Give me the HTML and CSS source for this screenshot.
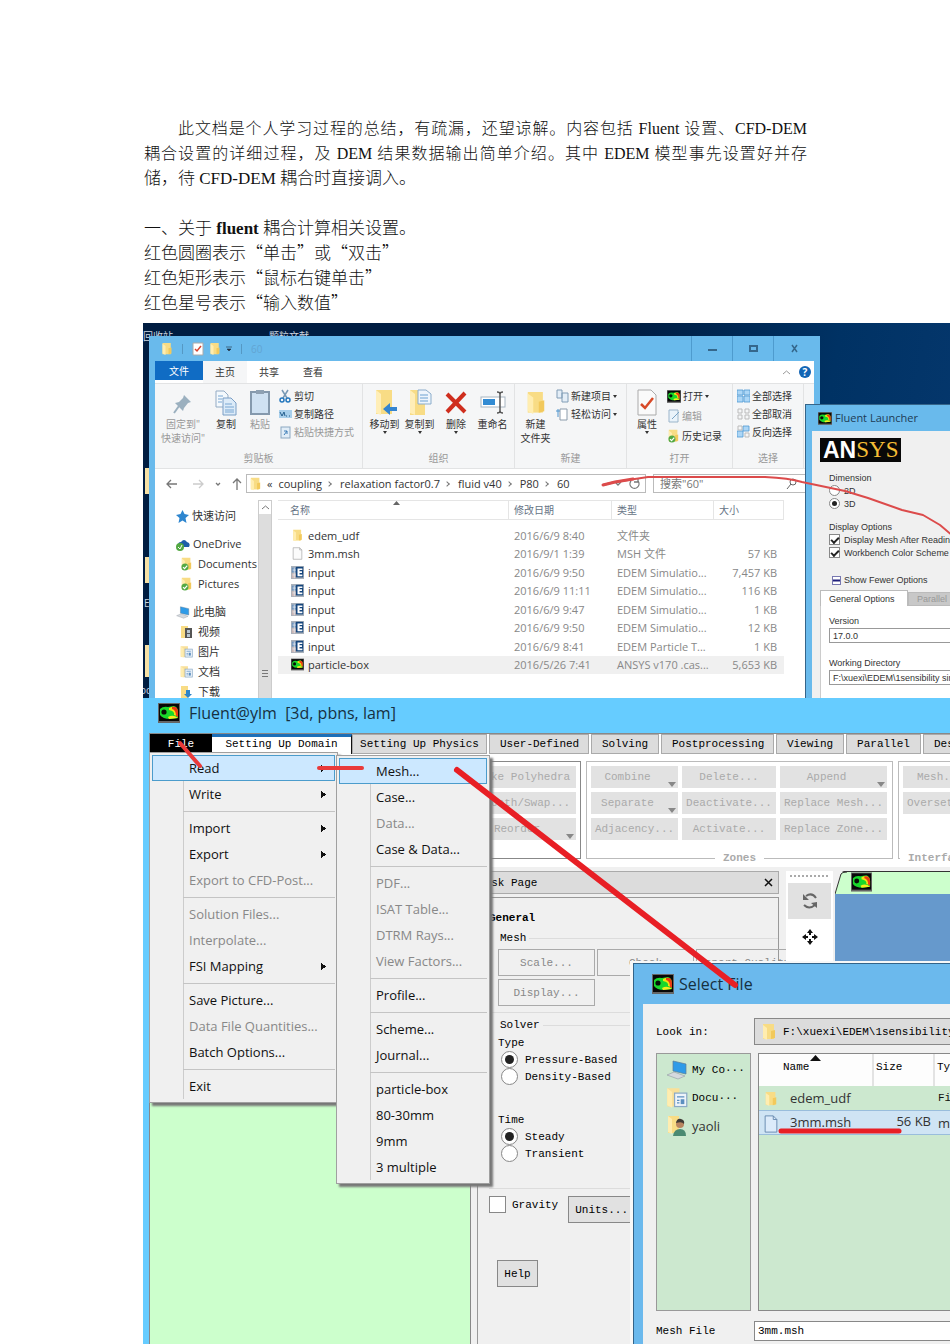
FILE: index.html
```html
<!DOCTYPE html>
<html lang="zh-CN">
<head>
<meta charset="utf-8">
<title>Fluent-EDEM 耦合设置</title>
<link rel="stylesheet" href="styles.css">
</head>
<body>
<svg class="defs" aria-hidden="true">
  <symbol id="fluent" viewBox="0 0 22 20"><rect width="22" height="20" fill="#666"/><rect x="1" y="1" width="20" height="17" fill="#080808"/><path d="M2 6Q5 3 10 4L16 3Q20 4 20 9V15L12 16Q5 16 2 12Z" fill="#19d82b"/><path d="M11 5Q17 2 19 6V13L16 12Q17 8 11 7Z" fill="#f2e310"/><path d="M14 4Q20 3 20 9V14L18 13Q18 7 14 6Z" fill="#ee3b12"/><path d="M10 14Q15 11 20 15L11 16Z" fill="#f4ef1c"/><circle cx="6" cy="9" r="2.600" fill="#061006"/></symbol>
  <symbol id="folder" viewBox="0 0 16 18"><path d="M2 1H13V16H2Z" fill="#f8dc85"/><path d="M2 2L6 5V17L2 15Z" fill="#ffedb0"/><path d="M10 8L14 7V15L10 16Z" fill="#f2c95c"/></symbol>
  <symbol id="file" viewBox="0 0 16 18"><path d="M2 1H11L14 4V17H2Z" fill="#fbfbfb" stroke="#aaa"/><path d="M11 1V4H14" fill="none" stroke="#aaa"/></symbol>
  <symbol id="edem" viewBox="0 0 16 16"><rect width="16" height="16" fill="#a9b1bb"/><path d="M1 2H6V8H1Z" fill="#6f94bd"/><path d="M1 9H6V15H1Z" fill="#c9b5b4"/><path d="M2 5H6M2 11H6M4 2V15" stroke="#e5e9ee"/><rect x="6" y="1" width="9" height="13" fill="#14457c"/><path d="M8 3H14V5H10.500V6.500H13.500V8.500H10.500V10.500H14V12.500H8Z" fill="#fff"/></symbol>
  <symbol id="folderok" viewBox="0 0 16 18"><use href="#folder"/><circle cx="6" cy="13" r="4.500" fill="#54a944"/><path d="M3.500 13L5.500 15L9 11" stroke="#fff" stroke-width="1.500" fill="none"/></symbol>
  <symbol id="folderdoc" viewBox="0 0 18 18"><path d="M1 1H11V16H1Z" fill="#f9e09a"/><path d="M1 1L5 4V17L1 15Z" fill="#ffedb0"/><rect x="7" y="5" width="10" height="11" fill="#eef4fa" stroke="#8aa9c6"/><path d="M9 8H15M9 11H11M9 13H11" stroke="#5c8fc0"/><path d="M12 10H15V14H12Z" fill="#5c8fc0"/></symbol>
  <symbol id="pc" viewBox="0 0 22 20"><path d="M7 1L20 4V14L7 11Z" fill="#2e9be8" stroke="#5d7b95" stroke-width=".7"/><path d="M1 15L8 12L19 16L12 19Z" fill="#d5d9de" stroke="#929aa2" stroke-width=".6"/></symbol>
  <symbol id="copy" viewBox="0 0 22 26"><path d="M1 1H9L13 5V17H1Z" fill="#f4f9fd" stroke="#93abc4"/><path d="M8 8H16L21 13V25H8Z" fill="#dcebf8" stroke="#7b9ec5"/><path d="M3 6H8M3 9H7M3 12H7M10 14H17M10 17H19M10 20H19M10 22H19" stroke="#79a6d2"/></symbol>
</svg>

<main class="document">
  <p class="intro indent">此文档是个人学习过程的总结，有疏漏，还望谅解。内容包括 Fluent 设置、CFD-DEM</p>
  <p class="intro">耦合设置的详细过程，及 DEM 结果数据输出简单介绍。其中 EDEM 模型事先设置好并存</p>
  <p>储，待 CFD-DEM 耦合时直接调入。</p>
  <h2>一、关于 <b>fluent</b> 耦合计算相关设置。</h2>
  <p class="note">红色圆圈表示“单击”或“双击”</p>
  <p class="note">红色矩形表示“鼠标右键单击”</p>
  <p class="note">红色星号表示“输入数值”</p>
</main>

<section class="desktop">
  <span class="shortcut bin">回收站</span><span class="shortcut papers">颗粒文献</span>
  <i class="edge edge-one"></i><i class="edge edge-two"></i><i class="edge edge-three"></i>
  <span class="shortcut letter">E</span><span class="shortcut docs">oc</span>

  <div class="explorer">
    <header class="ex-title">
      <svg width="12" height="14"><use href="#folder"/></svg><i class="bar"></i>
      <svg width="12" height="14" viewBox="0 0 12 14"><path d="M1 1H11V13H1Z" fill="#fff" stroke="#aaa"/><path d="M3 7L5 9L9 4" fill="none" stroke="#d64531" stroke-width="1.500"/></svg>
      <svg width="12" height="14"><use href="#folder"/></svg>
      <svg width="6" height="6" viewBox="0 0 6 6"><path d="M0 1H6M1 3H5L3 5Z" fill="#234" stroke="#234" stroke-width=".6"/></svg><i class="bar"></i><span class="ghost">60</span>
      <div class="win-buttons">
        <button aria-label="最小化"><svg width="9" height="9" viewBox="0 0 9 9"><path d="M0 6H9" stroke="#35678c" stroke-width="2"/></svg></button>
        <button aria-label="最大化"><svg width="9" height="9" viewBox="0 0 9 9"><path d="M1 2H8V7H1Z" fill="none" stroke="#35678c" stroke-width="2"/></svg></button>
        <button aria-label="关闭"><svg width="9" height="9" viewBox="0 0 9 9"><path d="M2 1L7 8M7 1L2 8" stroke="#35678c" stroke-width="1.500"/></svg></button>
      </div>
    </header>
    <nav class="ex-tabs">
      <button class="file-tab">文件</button><button class="on">主页</button><button>共享</button><button>查看</button>
      <span class="help"><svg width="9" height="5" viewBox="0 0 9 5"><path d="M1 4L4.500 1L8 4" fill="none" stroke="#999"/></svg><button class="q">?</button></span>
    </nav>
    <div class="ex-ribbon">
      <div class="group g-clip">
        <div class="tools">
          <button class="big dim w-pin"><svg width="26" height="28" viewBox="0 0 26 28"><path d="M14 6L21 13L18 14L14 19L13 22L5 14L9 13L13 9Z" fill="#9bb0bf"/><path d="M9 17L4 24" stroke="#9bb0bf" stroke-width="2"/></svg>固定到"<br>快速访问"</button>
          <button class="big w-copy"><svg width="22" height="28"><use href="#copy"/></svg>复制</button>
          <button class="big dim w-paste"><svg width="20" height="28" viewBox="0 0 20 28"><rect x="1" y="3" width="18" height="22" fill="#cfe1f2" stroke="#8599ad" stroke-width="2"/><rect x="6" y="1" width="8" height="4" fill="#8fa1b3"/></svg>粘贴</button>
          <div class="stack">
            <button><svg width="13" height="14" viewBox="0 0 13 14"><path d="M3 1L8 9M9 1L4 9" stroke="#7899b5" stroke-width="1.500"/><circle cx="3" cy="11" r="2" fill="none" stroke="#2477bd" stroke-width="1.500"/><circle cx="9" cy="11" r="2" fill="none" stroke="#2477bd" stroke-width="1.500"/></svg>剪切</button>
            <button><svg width="13" height="14" viewBox="0 0 13 14"><rect y="3" width="13" height="8" fill="#a8cfeb"/><path d="M1 5L3 9L5 5L6 9M7 9H8M10 9H11" stroke="#235d8c" fill="none"/></svg>复制路径</button>
            <button class="dim"><svg width="13" height="14" viewBox="0 0 13 14"><rect x="2" y="2" width="9" height="11" fill="#e1edf7" stroke="#8ba7c1"/><path d="M5 10L8 6M5 6H8V9" stroke="#3c7db7" fill="none"/></svg>粘贴快捷方式</button>
          </div>
        </div><footer>剪贴板</footer>
      </div>
      <div class="group g-org">
        <div class="tools">
          <button class="big"><svg width="26" height="28" viewBox="0 0 26 28"><path d="M4 1H20V25H4Z" fill="#f8dc85"/><path d="M4 1L9 5V26L4 24Z" fill="#ffeeb7"/><path d="M11 20L18 14V18H25V22H18V26Z" fill="#3484cf"/></svg>移动到<i class="caret"></i></button>
          <button class="big"><svg width="26" height="28" viewBox="0 0 26 28"><path d="M3 1H18V26H3Z" fill="#f8dc85"/><path d="M3 1L8 5V26L3 24Z" fill="#ffeeb7"/><path d="M11 1H19L24 5V15H11Z" fill="#eef5fc" stroke="#8baccb"/><path d="M13 6H21M13 9H21M13 12H21" stroke="#6ca1d1"/></svg>复制到<i class="caret"></i></button>
          <button class="big w-del"><svg width="24" height="28" viewBox="0 0 24 28"><path d="M3 5L21 23M21 4L3 23" stroke="#cf2e1e" stroke-width="4"/></svg>删除<i class="caret"></i></button>
          <button class="big"><svg width="26" height="28" viewBox="0 0 26 28"><rect x="1" y="8" width="24" height="10" fill="#fff" stroke="#a8b5c2"/><rect x="3" y="10" width="12" height="6" fill="#328bd3"/><path d="M17 3Q20 3 20 5Q20 3 23 3M20 5V22M17 24Q20 24 20 22Q20 24 23 24" fill="none" stroke="#555" stroke-width="1.500"/></svg>重命名</button>
        </div><footer>组织</footer>
      </div>
      <div class="group g-new">
        <div class="tools">
          <button class="big"><svg width="22" height="28"><use href="#folder"/></svg>新建<br>文件夹</button>
          <div class="stack">
            <button><svg width="13" height="14" viewBox="0 0 13 14"><path d="M1 1H6V9H1ZM6 4H12V13H6Z" fill="#e4eef7" stroke="#819db6"/></svg>新建项目<i class="caret"></i></button>
            <button><svg width="13" height="14" viewBox="0 0 13 14"><path d="M4 2H11V13H4Z" fill="#fff" stroke="#8b9bab"/><path d="M0 4H4M2 2V10" stroke="#4e94cd"/></svg>轻松访问<i class="caret"></i></button>
          </div>
        </div><footer>新建</footer>
      </div>
      <div class="group g-open">
        <div class="tools">
          <button class="big w-prop"><svg width="22" height="28" viewBox="0 0 22 28"><path d="M2 1H15L20 6V26H2Z" fill="#fafafa" stroke="#aaa"/><path d="M5 15L9 19L17 9" fill="none" stroke="#d84a28" stroke-width="2.500"/></svg>属性<i class="caret"></i></button>
          <div class="stack tall">
            <button><svg width="14" height="13"><use href="#fluent"/></svg>打开<i class="caret"></i></button>
            <button class="dim"><svg width="13" height="14" viewBox="0 0 13 14"><path d="M2 1H11V13H2Z" fill="#eaf3fa" stroke="#9bb5ca"/><path d="M5 10L12 3" stroke="#7ba4c5"/></svg>编辑</button>
            <button><svg width="13" height="14"><use href="#folderok"/></svg>历史记录</button>
          </div>
        </div><footer>打开</footer>
      </div>
      <div class="group g-sel">
        <div class="tools"><div class="stack">
            <button><svg width="13" height="14" viewBox="0 0 13 14"><path d="M0 1H6V6H0ZM7 1H13V6H7ZM0 7H6V13H0ZM7 7H13V13H7Z" fill="#acd6f6" stroke="#4e9ad3" stroke-width=".8"/></svg>全部选择</button>
            <button><svg width="13" height="14" viewBox="0 0 13 14"><path d="M1 2H5V6H1ZM8 2H12V6H8ZM1 8H5V12H1ZM8 8H12V12H8Z" fill="none" stroke="#bbb"/></svg>全部取消</button>
            <button><svg width="13" height="14" viewBox="0 0 13 14"><path d="M6 1H12V6H6ZM0 6H6V12H0Z" fill="#acd6f6" stroke="#4e9ad3" stroke-width=".8"/><path d="M1 1H5V5H1ZM8 8H12V12H8Z" fill="none" stroke="#bbb"/></svg>反向选择</button>
        </div></div><footer>选择</footer>
      </div>
    </div>
    <div class="ex-address">
      <svg width="80" height="14" viewBox="0 0 80 14" fill="none" stroke="#777" stroke-width="1.300"><path d="M2 7H12M6 3L2 7L6 11"/><path stroke="#ccc" d="M28 7H38M34 3L38 7L34 11"/><path d="M51 6L53 8L55 6"/><path d="M72 13V2M68 6L72 2L76 6"/></svg>
      <div class="crumbs"><svg width="13" height="14"><use href="#folder"/></svg><span>«</span><a href="#c">coupling</a><i></i><a href="#r">relaxation factor0.7</a><i></i><a href="#f">fluid v40</a><i></i><a href="#p">P80</a><i></i><a href="#s">60</a>
        <svg class="reload" width="28" height="14" viewBox="0 0 28 14" fill="none" stroke="#777" stroke-width="1.300"><path d="M1 5L4 8L7 5"/><path d="M17 4A4.500 4.500 0 1 0 24 4M24 1V5H20"/></svg></div>
      <div class="search"><input aria-label="搜索" value="搜索&quot;60&quot;"><svg width="12" height="12" viewBox="0 0 12 12" fill="none" stroke="#666"><circle cx="7" cy="4" r="3"/><path d="M5 6L1 11"/></svg></div>
    </div>
    <div class="ex-body">
      <ul class="side">
        <li><svg width="13" height="13" viewBox="0 0 13 13"><path d="M6.500 0L8.500 4L13 5L9.500 8L10.500 13L6.500 10.500L2.500 13L3.500 8L0 5L4.500 4Z" fill="#2e86cf"/></svg>快速访问</li>
        <li class="top"><svg width="14" height="13" viewBox="0 0 14 13"><path d="M3 9Q1 4 5 4Q8 0 11 4Q15 5 13 9Z" fill="#1e5fa9"/><circle cx="4" cy="9" r="4" fill="#54a944"/><path d="M2 9L4 11L6 7" fill="none" stroke="#fff"/></svg>OneDrive</li>
        <li class="sub"><svg width="13" height="14"><use href="#folderok"/></svg>Documents</li>
        <li class="sub"><svg width="13" height="14"><use href="#folderok"/></svg>Pictures</li>
        <li class="top"><svg width="14" height="13"><use href="#pc"/></svg>此电脑</li>
        <li class="sub"><svg width="13" height="14" viewBox="0 0 13 14"><path d="M1 1H8V13H1Z" fill="#f8dc85"/><rect x="5" y="3" width="7" height="10" fill="#555"/><path d="M7 5H10V8H7ZM7 9H10V12H7Z" fill="#b8c7d2"/></svg>视频</li>
        <li class="sub"><svg width="13" height="14"><use href="#folderdoc"/></svg>图片</li>
        <li class="sub"><svg width="13" height="14"><use href="#folderdoc"/></svg>文档</li>
        <li class="sub"><svg width="13" height="14" viewBox="0 0 13 14"><path d="M1 1H8V13H1Z" fill="#f8dc85"/><path d="M6 5H10V9H12L8 13L4 9H6Z" fill="#2c83c8"/></svg>下载</li>
      </ul>
      <div class="scroll"><button aria-label="向上滚动"><svg width="7" height="5" viewBox="0 0 7 5"><path d="M0 4L3.500 1L7 4" fill="none" stroke="#777"/></svg></button><i></i></div>
      <table class="files">
        <colgroup><col class="c-name"><col class="c-date"><col class="c-type"><col class="c-size"></colgroup>
        <thead><tr><th>名称<svg class="sort" width="7" height="4" viewBox="0 0 7 4"><path d="M0 4L3.500 0L7 4Z" fill="#666"/></svg></th><th>修改日期</th><th>类型</th><th>大小</th></tr></thead>
        <tbody>
        <tr><td><svg width="13" height="13"><use href="#folder"/></svg>edem_udf</td><td>2016/6/9 8:40</td><td>文件夹</td><td></td></tr>
        <tr><td><svg width="13" height="13"><use href="#file"/></svg>3mm.msh</td><td>2016/9/1 1:39</td><td>MSH 文件</td><td>57 KB</td></tr>
        <tr><td><svg width="13" height="13"><use href="#edem"/></svg>input</td><td>2016/6/9 9:50</td><td>EDEM Simulatio...</td><td>7,457 KB</td></tr>
        <tr><td><svg width="13" height="13"><use href="#edem"/></svg>input</td><td>2016/6/9 11:11</td><td>EDEM Simulatio...</td><td>116 KB</td></tr>
        <tr><td><svg width="13" height="13"><use href="#edem"/></svg>input</td><td>2016/6/9 9:47</td><td>EDEM Simulatio...</td><td>1 KB</td></tr>
        <tr><td><svg width="13" height="13"><use href="#edem"/></svg>input</td><td>2016/6/9 9:50</td><td>EDEM Simulatio...</td><td>12 KB</td></tr>
        <tr><td><svg width="13" height="13"><use href="#edem"/></svg>input</td><td>2016/6/9 8:41</td><td>EDEM Particle T...</td><td>1 KB</td></tr>
        <tr class="sel"><td><svg width="13" height="13"><use href="#fluent"/></svg>particle-box</td><td>2016/5/26 7:41</td><td>ANSYS v170 .cas...</td><td>5,653 KB</td></tr>
        </tbody>
      </table>
    </div>
  </div>

  <div class="launcher">
    <header><svg width="14" height="13"><use href="#fluent"/></svg>Fluent Launcher</header>
    <div class="la-body">
      <div class="ansys"><b>AN</b><span>SYS</span></div>
      <fieldset class="la-set"><legend>Dimension</legend>
        <label><input type="radio" name="dim">2D</label>
        <label><input type="radio" name="dim" checked>3D</label></fieldset>
      <fieldset class="la-set"><legend>Display Options</legend>
        <label><input type="checkbox" checked>Display Mesh After Reading</label>
        <label><input type="checkbox" checked>Workbench Color Scheme</label></fieldset>
      <button class="fewer"><svg width="9" height="9" viewBox="0 0 9 9"><rect x=".5" y=".5" width="8" height="8" fill="#fff" stroke="#7777b0"/><path d="M1 4.500H8" stroke="#20207c" stroke-width="2"/></svg>Show Fewer Options</button>
      <div class="la-tabs"><button class="on">General Options</button><button>Parallel</button></div>
      <div class="la-panel">
        <label>Version<input value="17.0.0"></label>
        <label>Working Directory<input value="F:\xuexi\EDEM\1sensibility simulation"></label>
      </div>
    </div>
  </div>
  <svg class="ink" width="807" height="375" viewBox="0 0 807 375" fill="none" stroke="#dc4b4b" stroke-linecap="round" stroke-linejoin="round"><path d="M460 162L472 159L505 154H622Q646 155 659 159L702 168L725 175L759 187L780 192L797 202L810 213" stroke-width="2"/><path d="M460 162L472 159L490 156" stroke-width="3"/></svg>
</section>

<section class="fluent">
  <header class="fl-title"><svg width="22" height="20"><use href="#fluent"/></svg>Fluent@ylm&nbsp; [3d, pbns, lam]</header>
  <div class="fl-frame">
    <nav class="fl-tabs"><button class="file">File</button><button class="on t-dom">Setting Up Domain</button><button class="t-phy">Setting Up Physics</button><button class="t-usr">User-Defined</button><button class="t-sol">Solving</button><button class="t-pos">Postprocessing</button><button class="t-sol">Viewing</button><button class="t-par">Parallel</button><button>Design</button></nav>
    <div class="fl-ribbon">
      <div class="rg r-mesh"><div class="cells"><button disabled>Make Polyhedra</button><button disabled>Smooth/Swap...</button><button disabled class="drop"><span>Reorder</span></button></div></div>
      <div class="rg r-zones"><div class="cells">
        <button disabled class="drop"><span>Combine</span></button><button disabled>Delete...</button><button disabled class="drop"><span>Append</span></button>
        <button disabled class="drop"><span>Separate</span></button><button disabled>Deactivate...</button><button disabled>Replace Mesh...</button>
        <button disabled>Adjacency...</button><button disabled>Activate...</button><button disabled>Replace Zone...</button></div>
        <div class="cap">Zones</div></div>
      <div class="rg r-int"><div class="cells"><button disabled>Mesh...</button><button disabled>Overset...</button></div><div class="cap">Interfaces</div></div>
    </div>
    <div class="fl-work">
      <div class="tree"></div>
      <div class="task">
        <div class="task-head"><span>Task Page</span><button aria-label="Close"><svg width="9" height="9" viewBox="0 0 9 9"><path d="M1 1L8 8M8 1L1 8" stroke="#111" stroke-width="1.500"/></svg></button></div>
        <div class="task-body">
          <h3>General</h3>
          <div class="rule"><span>Mesh</span></div>
          <div class="mesh-btns"><button disabled>Scale...</button><button disabled>Check</button><button disabled>Report Quality</button><button disabled>Display...</button></div>
          <div class="rule solver"><span>Solver</span></div>
          <fieldset class="opts"><legend>Type</legend><label><input type="radio" name="type" checked>Pressure-Based</label><label><input type="radio" name="type">Density-Based</label></fieldset>
          <fieldset class="opts time"><legend>Time</legend><label><input type="radio" name="time" checked>Steady</label><label><input type="radio" name="time">Transient</label></fieldset>
          <div class="grav"><label><input type="checkbox">Gravity</label><button>Units...</button></div>
          <button class="helpb">Help</button>
        </div>
      </div>
      <div class="vbar"><i></i>
        <button class="on" aria-label="Rotate"><svg width="18" height="18" viewBox="0 0 18 18" fill="none" stroke="#666" stroke-width="2"><path d="M5 4Q11 0 15 6M3 13Q8 18 14 13"/><path d="M2 2V8H8ZM16 10V16L10 11Z" fill="#666" stroke="none"/></svg></button>
        <button aria-label="Pan"><svg width="18" height="18" viewBox="0 0 18 18"><path d="M9 1L12 5H10V7H8V5H6ZM9 17L6 13H8V11H10V13H12ZM1 9L5 6V8H7V10H5V12ZM17 9L13 12V10H11V8H13V6Z" fill="#111"/></svg></button></div>
      <div class="view"><div class="view-tab"><svg class="slant" width="12" height="23" viewBox="0 0 12 23"><path d="M0 0H9Q7 0 6 3L0 23Z" fill="#f0f0f0"/><path d="M0 23L6 3Q7 1 12 1" fill="none" stroke="#333"/></svg><svg width="21" height="20"><use href="#fluent"/></svg></div></div>
    </div>
  </div>

  <ul class="menu menu-file">
    <li class="hot more"><button>Read</button></li><li class="more"><button>Write</button></li>
    <li class="more sep"><button>Import</button></li><li class="more"><button>Export</button></li><li><button disabled>Export to CFD-Post...</button></li>
    <li class="sep"><button disabled>Solution Files...</button></li><li><button disabled>Interpolate...</button></li><li class="more"><button>FSI Mapping</button></li>
    <li class="sep"><button>Save Picture...</button></li><li><button disabled>Data File Quantities...</button></li><li><button>Batch Options...</button></li>
    <li class="sep"><button>Exit</button></li>
  </ul>
  <ul class="menu menu-read">
    <li class="hot"><button>Mesh...</button></li><li><button>Case...</button></li><li><button disabled>Data...</button></li><li><button>Case &amp; Data...</button></li>
    <li class="sep"><button disabled>PDF...</button></li><li><button disabled>ISAT Table...</button></li><li><button disabled>DTRM Rays...</button></li><li><button disabled>View Factors...</button></li>
    <li class="sep"><button>Profile...</button></li>
    <li class="sep"><button>Scheme...</button></li><li><button>Journal...</button></li>
    <li class="sep"><button>particle-box</button></li><li><button>80-30mm</button></li><li><button>9mm</button></li><li><button>3 multiple</button></li>
  </ul>

  <div class="dialog">
    <header><svg width="22" height="20"><use href="#fluent"/></svg>Select File</header>
    <div class="dg-body">
      <label for="lookin">Look in:</label>
      <button class="combo" id="lookin"><svg width="16" height="18"><use href="#folder"/></svg>F:\xuexi\EDEM\1sensibility</button>
      <ul class="places">
        <li><svg width="24" height="22"><use href="#pc"/></svg>My Co···</li>
        <li><svg width="20" height="20"><use href="#folderdoc"/></svg>Docu···</li>
        <li class="ui"><svg width="20" height="22" viewBox="0 0 20 22"><path d="M1 1H12V18H1Z" fill="#f8dc85"/><path d="M1 1L5 4V19L1 17Z" fill="#ffedb0"/><circle cx="13" cy="9" r="4" fill="#b98560"/><path d="M9 8Q10 3 14 4Q18 5 17 9Q15 6 9 8Z" fill="#3f3a35"/><path d="M6 21Q7 14 13 14Q19 14 19 21Z" fill="#4b8a72"/></svg>yaoli</li>
      </ul>
      <div class="listing"><table>
        <colgroup><col class="n"><col class="s"><col></colgroup>
        <thead><tr><th>Name<svg class="sort" width="11" height="6" viewBox="0 0 11 6"><path d="M0 6L5.500 0L11 6Z" fill="#111"/></svg></th><th>Size</th><th>Type</th></tr></thead>
        <tbody><tr><td><svg width="14" height="18"><use href="#folder"/></svg>edem_udf</td><td></td><td class="mono">File Folder</td></tr>
        <tr class="sel"><td><svg width="15" height="20" viewBox="0 0 15 20"><path d="M1 1H10L14 5V19H1Z" fill="#dcebfa" stroke="#6286ad"/><path d="M10 1V5H14" fill="none" stroke="#6286ad"/></svg>3mm.msh</td><td>56 KB</td><td>msh File</td></tr></tbody>
      </table></div>
      <label for="meshfile">Mesh File</label><input id="meshfile" value="3mm.msh">
    </div>
  </div>
  <svg class="ink" width="807" height="646" viewBox="0 0 807 646" fill="none" stroke="#ee2a2e" stroke-linecap="round"><path d="M37 45L57 68" stroke-width="4" stroke="#e93a3a"/><path d="M176 70H219" stroke-width="4" stroke="#e93a3a"/><path d="M314 72L592 287" stroke="#e81f25" stroke-width="6"/><path d="M638 433H756" stroke="#e81f25" stroke-width="5"/></svg>
</section>
</body>
</html>
```
FILE: styles.css
```css
* { box-sizing: border-box; }
body { margin: 0; min-height: 100vh; display: flex; flex-direction: column; background: #fff; color: #000; overflow-x: hidden; font-family: "Liberation Serif", "Noto Sans CJK SC", serif; }
button, input { font: inherit; color: inherit; margin: 0; padding: 0; border: 0; background: none; border-radius: 0; white-space: nowrap; }
ul { list-style: none; margin: 0; padding: 0; }
fieldset { border: 0; margin: 0; padding: 0; min-width: 0; }
legend { padding: 0; }
a { color: inherit; text-decoration: none; }
svg { flex: none; }
.defs { position: absolute; width: 0; height: 0; }
.ink { position: absolute; left: 0; top: 0; pointer-events: none; }

/* document text */
.document { padding: 116px 143px 7px 144px; font-size: 17px; line-height: 25px; font-weight: 300; color: #111; }
.document p, .document h2 { margin: 0; font-size: 17px; font-weight: 300; white-space: nowrap; height: 25px; }
.document b { font-weight: 700; }
.document p.intro { font-size: 16px; white-space: normal; text-align: justify; text-align-last: justify; }
.document p.indent { padding-left: 34px; }
.document h2 { margin-top: 25px; }
.document .note { font-family: "Noto Sans CJK SC", sans-serif; line-height: 21px; }

/* desktop picture */
.desktop { position: relative; height: 375px; margin-left: 143px; overflow: hidden; background: linear-gradient(100deg, #001d41 55%, #003264 80%, #06386e); font: 11px/16px "Open Sans", "Noto Sans CJK SC", sans-serif; color: #333; }
.shortcut { position: absolute; color: #ccd6e0; font-size: 10px; line-height: 12px; }
.bin { left: 0; top: 7px; }
.papers { left: 126px; top: 7px; }
.letter { left: 1px; top: 274px; }
.docs { left: -3px; top: 361px; }
.edge { position: absolute; left: 2px; width: 4px; background: #f6e0a4; }
.edge-one { top: 145px; height: 26px; }
.edge-two { top: 234px; height: 26px; }
.edge-three { top: 322px; height: 32px; }

.explorer { position: absolute; left: 6px; top: 13px; width: 671px; height: 380px; border: solid #69baec; border-width: 0 6px; background: #fff; display: flex; flex-direction: column; }
.ex-title { height: 25px; background: #69baec; display: flex; align-items: center; gap: 5px; padding-left: 6px; }
.bar { width: 1px; height: 10px; background: #5598c4; }
.ex-title .bar { margin: 0 4px; }
.ghost { color: #62a5d3; font-size: 10px; }
.win-buttons { margin-left: auto; display: flex; align-self: stretch; }
.win-buttons button { width: 41px; border-left: 1px solid #4e9bce; }
.ex-tabs { height: 22px; display: flex; align-items: stretch; font-size: 10px; }
.ex-tabs button { width: 44px; }
.ex-tabs .file-tab { width: 48px; background: #106cc4; color: #fff; margin: 0 0 3px; }
.ex-tabs .on { background: #f5f6f7; }
.help { margin-left: auto; display: flex; align-items: center; gap: 8px; padding-right: 3px; }
.ex-tabs .q { width: 12px; height: 12px; border-radius: 6px; background: #1265b5; color: #fff; font-weight: 700; line-height: 12px; }
.ex-ribbon { height: 86px; background: #f5f6f7; border: solid #e2e3e4; border-width: 1px 0; display: flex; font-size: 10px; line-height: 14px; }
.group { display: flex; flex-direction: column; border-right: 1px solid #e2e3e4; }
.g-clip { width: 208px; } .g-org { width: 152px; } .g-new { width: 112px; } .g-open { width: 106px; } .g-sel { width: 71px; }
.tools { flex: 1; display: flex; padding-top: 5px; }
.g-org .tools { padding-left: 4px; }
.g-sel .tools { padding-left: 4px; }
.group footer { text-align: center; height: 17px; color: #999; }
.big { display: flex; flex-direction: column; align-items: center; width: 35px; line-height: 14px; }
.big svg { height: 28px; }
.w-pin { width: 56px; } .w-copy { width: 30px; } .w-paste { width: 38px; } .w-del { width: 38px; }
.g-new .big { width: 41px; } .w-prop { width: 40px; }
.caret { width: 0; height: 0; border: solid transparent; border-width: 3px 2px 0; border-top-color: #333; }
.stack { display: flex; flex-direction: column; gap: 4px; }
.stack.tall { gap: 6px; }
.stack button { display: flex; align-items: center; gap: 2px; height: 14px; }
.dim { color: #999; }
.ex-address { height: 29px; display: flex; align-items: center; padding-left: 10px; }
.crumbs { margin-left: 1px; width: 400px; flex: none; height: 19px; border: 1px solid #bbb; display: flex; align-items: center; padding: 0 3px 0 2px; }
.crumbs span { margin: 0 6px 0 5px; }
.crumbs i { width: 4px; height: 4px; border: solid #777; border-width: 1px 1px 0 0; rotate: 45deg; margin: 0 9px 0 5px; }
.reload { margin-left: auto; }
.search { margin-left: 7px; flex: 1; min-width: 0; height: 19px; border: 1px solid #bbb; display: flex; align-items: center; padding: 0 15px 0 6px; color: #777; }
.search input { flex: 1; min-width: 0; }
.ex-body { flex: 1; display: flex; min-height: 0; padding-top: 2px; }
.side { width: 103px; padding: 6px 0 0 21px; white-space: nowrap; }
.side li { height: 20px; display: flex; align-items: center; gap: 3px; }
.side .top { margin-top: 8px; }
.side .sub { padding-left: 4px; gap: 5px; }
.scroll { width: 14px; flex: none; background: #ddd; border: solid #ccc; border-width: 1px 1px 0; display: flex; flex-direction: column; align-items: center; }
.scroll button { width: 12px; height: 13px; background: #fff; display: grid; place-items: center; }
.scroll i { width: 6px; height: 8px; margin-top: 156px; background: repeating-linear-gradient(#777 0 1px, transparent 1px 3px); }
.files { align-self: flex-start; table-layout: fixed; width: 506px; margin-left: 6px; border-collapse: separate; border-spacing: 0; white-space: nowrap; color: #888; }
.c-name { width: 231px; } .c-date { width: 103px; } .c-type { width: 102px; } .c-size { width: 70px; }
.files th { height: 20px; padding: 0 5px; font-weight: 400; font-size: 10px; text-align: left; color: #667385; border: solid #e5e5e5; border-width: 1px 1px 1px 0; position: relative; }
.files th:first-child { padding-left: 12px; }
.files .sort { position: absolute; left: 115px; top: 0; }
.files tbody::before { content: ""; display: block; height: 6px; }
.files td { height: 18px; padding: 0 5px; line-height: 18px; }
.files tr:nth-child(odd) td { height: 19px; }
.files td:first-child { color: #333; padding-left: 13px; }
.files td:last-child { text-align: right; padding: 0 7px 0 0; }
.files td svg { vertical-align: -2px; margin-right: 4px; }
.files .sel td { background: #f0f0f0; }

.launcher { position: absolute; left: 663px; top: 82px; width: 320px; height: 300px; border-left: 6px solid #69baec; box-shadow: -1px -1px #35658a; background: #f0f0f0; color: #333; }
.launcher header { height: 26px; background: #69baec; display: flex; align-items: center; gap: 3px; padding-left: 6px; font-size: 11px; color: #1d3c55; }
.la-body { font: 9px/14px "Liberation Sans", sans-serif; padding: 7px 0 0 8px; display: flex; flex-direction: column; align-items: flex-start; }
.ansys { display: flex; align-items: center; background: #080808; height: 24px; padding: 0 3px; font-size: 23px; line-height: 24px; color: #fff; }
.ansys b { font-family: "Liberation Sans", sans-serif; }
.ansys span { font-family: "Liberation Serif", serif; color: #f5bd35; }
.la-set { margin: 9px 0 0 9px; }
.la-set + .la-set { margin-top: 10px; }
.la-set label { display: flex; align-items: center; gap: 4px; height: 13px; white-space: nowrap; }
.la-set legend { height: 13px; }
input[type=radio], input[type=checkbox] { appearance: none; flex: none; background: #fff; border: 1px solid #888; display: grid; place-items: center; }
input[type=radio] { border-radius: 50%; }
.la-set input { width: 11px; height: 11px; }
.la-set input[type=radio]:checked::before { content: ""; width: 5px; height: 5px; border-radius: 50%; background: #222; }
.la-set input[type=checkbox]:checked::before { content: ""; width: 6px; height: 3px; border: solid #222; border-width: 0 0 2px 2px; rotate: -45deg; }
.fewer { display: flex; align-items: center; gap: 3px; margin: 14px 0 4px 12px; height: 14px; }
.la-tabs { display: flex; align-items: flex-end; height: 15px; }
.la-tabs button { width: 80px; height: 14px; background: #c8c8c8; color: #999; text-align: left; padding: 0 8px; border: 1px solid #bbb; line-height: 12px; }
.la-tabs .on { width: 88px; height: 16px; background: #fff; color: #333; border-bottom: 0; }
.la-panel { align-self: stretch; height: 120px; background: #fff; border-left: 1px solid #ccc; padding: 8px 0 0 8px; }
.la-panel label { display: block; margin-bottom: 13px; }
.la-panel input { display: block; width: 100%; height: 15px; border: 1px solid #999; padding-left: 3px; }

/* Fluent picture */
.fluent { position: relative; flex: 1; min-height: 646px; height: 646px; margin-left: 143px; overflow: hidden; background: #66ccff; font: 11px/16px "Liberation Mono", monospace; display: flex; flex-direction: column; }
.fl-title { height: 35px; display: flex; align-items: center; gap: 9px; padding: 0 0 5px 15px; font: 16px/24px "Open Sans", sans-serif; color: #16303f; }
.fl-frame { flex: 1; margin-left: 6px; border: solid #888; border-width: 1px 0 0 1px; background: #f0f0f0; display: flex; flex-direction: column; min-height: 0; }
.fl-tabs { display: flex; height: 20px; gap: 2px; background: #fff; flex: none; }
.fl-tabs button { background: #dcdcdc; border: 1px solid #aaa; flex: none; padding: 0 10px; line-height: 18px; }
.fl-tabs .file { width: 62px; background: #000; color: #fff; border: 0; margin-right: -2px; }
.fl-tabs .on { background: #fff; border: solid #111; border-width: 0 1px 0 0; border-top: 3px solid #1c6fb8; line-height: 12px; margin-right: -2px; padding: 0 0 4px; }
.t-dom { width: 140px; }
.fl-tabs .t-phy { width: 135px; padding: 0; } .t-usr { width: 100px; } .fl-tabs .t-sol { width: 68px; padding: 0; } .fl-tabs .t-pos { width: 113px; } .t-par { width: 75px; }
.fl-ribbon { height: 113px; flex: none; background: #fff; display: flex; gap: 5px; padding: 7px 0 8px 317px; }
.rg { border: 1px solid #bbb; padding: 4px; display: flex; flex-direction: column; flex: none; }
.r-mesh { width: 114px; border-color: #888; }
.r-zones { width: 307px; border-bottom: 0; }
.r-int { width: 84px; border-bottom: 0; }
.cells { display: grid; gap: 4px; grid-auto-rows: 22px; }
.r-zones .cells { grid-template-columns: 87px 94px 107px; }
.cells button { background: #e2e2e2; color: #aaa; position: relative; }
.drop span { margin-right: 14px; }
.drop::after { content: ""; position: absolute; right: 2px; bottom: 1px; border: solid transparent; border-width: 5px 4px 0; border-top-color: #888; }
.cap { margin: auto -4px -11px; display: flex; align-items: center; gap: 8px; font-weight: 700; color: #aaa; }
.cap::before, .cap::after { content: ""; flex: 1; height: 1px; background: #bbb; }
.r-int .cap::before, .r-int .cap::after { flex: none; width: 1px; }
.fl-work { flex: 1; display: flex; padding-top: 4px; min-height: 0; }
.tree { width: 321px; flex: none; background: #ccffcc; border-right: 1px solid #888; }
.task { width: 302px; flex: none; margin-left: 6px; display: flex; flex-direction: column; }
.task-head { height: 23px; background: #dcdcdc; border: 1px solid #aaa; display: flex; align-items: center; justify-content: space-between; padding-right: 5px; }
.task-head button { display: grid; }
.task-body { flex: 1; margin-top: 3px; border: solid #999; border-width: 1px 1px 0; padding-left: 11px; }
.task-body h3 { font-size: 11px; line-height: 16px; margin: 12px 0 4px; }
.rule { display: flex; align-items: center; gap: 3px; padding-left: 11px; height: 16px; }
.rule::after { content: ""; flex: 1; height: 1px; background: #dcdcdc; }
.mesh-btns { display: grid; grid-template-columns: repeat(3, 97px); grid-auto-rows: 27px; gap: 3px 2px; padding: 3px 0 6px 9px; border-bottom: 1px solid #dcdcdc; }
.mesh-btns button { border: 1px solid #aaa; color: #888; }
.rule.solver { margin-top: 4px; }
.opts { padding-left: 9px; margin-top: 2px; }
.opts label { display: flex; align-items: center; gap: 7px; height: 17px; margin-left: 3px; }
.opts input, .grav input { width: 17px; height: 17px; }
.opts input:checked::before { content: ""; width: 9px; height: 9px; border-radius: 50%; background: #222; }
.opts.time { margin-top: 27px; padding-bottom: 26px; border-bottom: 1px solid #dcdcdc; }
.grav { display: flex; align-items: flex-start; gap: 10px; margin-top: 7px; }
.grav label { display: flex; align-items: center; gap: 6px; }
.grav button, .helpb { height: 27px; border: 1px solid #888; background: #e1e1e1; padding: 0 6px; }
.grav button { width: 97px; text-align: left; }
.helpb { width: 41px; margin: 37px 0 0 8px; }
.vbar { width: 47px; flex: none; margin-left: 7px; background: #fff; padding: 4px 2px 0; display: flex; flex-direction: column; }
.vbar i { height: 2px; margin: 0 2px 6px; background: repeating-linear-gradient(90deg, #aaa 0 2px, transparent 2px 4px); }
.vbar button { height: 36px; display: grid; place-items: center; }
.vbar .on { background: #e1e1e1; }
.view { flex: 1; margin-left: 2px; background: #6699cc; }
.view-tab { height: 23px; background: #ccffcc; border-top: 1px solid #333; display: flex; gap: 4px; }
.slant { margin-top: -1px; }

.menu { position: absolute; background: #f0f0f0; border: 1px solid #a0a0a0; box-shadow: 3px 3px 2px #777; padding: 2px; font: 13px/26px "Open Sans", sans-serif; color: #111; }
.menu-file { left: 6px; top: 54px; width: 189px; padding-bottom: 3px; }
.menu-read { left: 193px; top: 57px; width: 154px; padding-bottom: 3px; }
.menu li { position: relative; height: 26px; padding-left: 32px; }
.menu li::before { content: ""; position: absolute; left: 31px; top: 0; bottom: 0; border-left: 1px solid #ccc; }
.menu .sep { margin-top: 8px; }
.menu .sep::before { top: -8px; }
.menu .sep::after { content: ""; position: absolute; left: 31px; right: 0; top: -4px; border-top: 1px solid #c4c4c4; }
.menu button { display: block; width: 100%; height: 26px; padding-left: 5px; text-align: left; }
.menu button:disabled { color: #888; }
.menu .more button { background: conic-gradient(from 233deg at 100% 50%, #111 74deg, transparent 0) no-repeat right 9px center / 5px 9px; }
.menu .hot { background: #cce8ff; border: 1px solid #4b9ccc; padding-left: 31px; }
.menu .hot::before { display: none; }
.menu .hot button { height: 24px; line-height: 24px; background-position: right 8px center; }

.dialog { position: absolute; left: 491px; top: 266px; width: 520px; height: 420px; border: solid #6bb9ed; border-width: 0 0 0 9px; box-shadow: 0 0 0 1px #33648a, -3px -2px 0 1px #f8f8f8; background: #f0f0f0; }
.dialog header { height: 40px; background: #6bb9ed; display: flex; align-items: center; gap: 5px; padding-left: 9px; font: 16px/24px "Open Sans", sans-serif; color: #16303f; }
.dg-body { display: grid; grid-template-columns: 98px 1fr; grid-template-rows: 27px 258px 20px; row-gap: 8px; padding: 14px 0 0 13px; align-items: center; }
.dg-body > input { height: 20px; border: 1px solid #888; background: #fff; padding-left: 3px; margin-top: 4px; }
.dg-body > label[for=meshfile] { margin-top: 4px; }
.combo { height: 27px; border: 1px solid #888; background: #dcdcdc; display: flex; align-items: center; gap: 6px; padding-left: 6px; }
.places { align-self: stretch; margin-right: 3px; border: 1px solid #999; background: #cce8cf; padding: 2px 0 0 9px; }
.places li { display: flex; align-items: center; height: 28px; gap: 4px; }
.places svg { width: 22px; height: 22px; }
.ui, .listing td { font: 13px/20px "Open Sans", sans-serif; color: #333; }
.listing { align-self: stretch; margin-left: 4px; border: 1px solid #888; background: #cce8cf; }
.listing table { border-collapse: separate; border-spacing: 0; table-layout: fixed; width: 100%; }
.listing .n { width: 115px; } .listing .s { width: 61px; }
.listing th { position: relative; background: #fdfdfd; height: 32px; padding: 0 0 6px 2px; text-align: left; font-weight: 400; border-right: 2px solid #e3e3e3; }
.listing th:first-child { padding-left: 24px; }
.listing .sort { position: absolute; left: 51px; top: 1px; }
.listing td { height: 24px; padding: 0 0 0 3px; white-space: nowrap; }
.listing td:first-child { padding-left: 5px; }
.listing td svg { vertical-align: middle; margin-right: 12px; height: 18px; width: 14px; }
.listing .mono { font: 11px/16px "Liberation Mono", monospace; color: #111; }
.listing .sel td { background: #cfe4f4; border: solid #99bddc; border-width: 1px 0; }
.listing td:nth-child(2) { text-align: right; padding: 0 4px 3px 0; }
```
